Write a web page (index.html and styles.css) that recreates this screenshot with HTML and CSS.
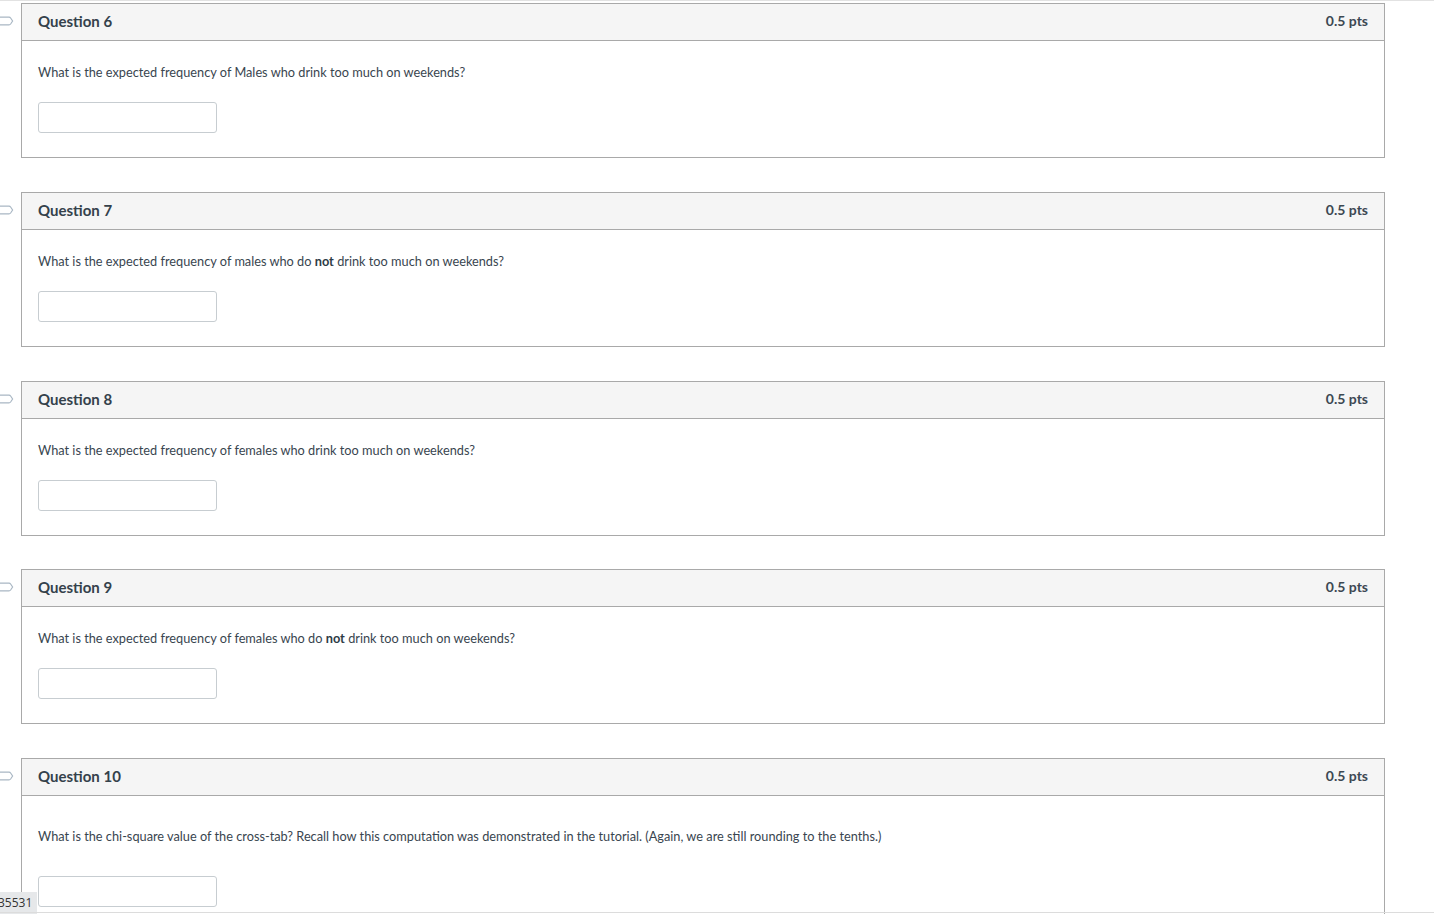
FILE: index.html
```html
<!DOCTYPE html>
<html lang="en">
<head>
<meta charset="utf-8">
<title>Quiz</title>
<link rel="stylesheet" href="styles.css">
</head>
<body>
<div class="topline"></div>
<main class="quiz">
  <section class="row">
    <div class="gutter"><svg class="flag" width="14" height="10" viewBox="0 0 14 10"><path d="M-4 1.2 H9 Q10 1.2 10.6 2 L12.6 5 L10.6 8 Q10 8.8 9 8.8 H-4" fill="none" stroke="#a9b7c4" stroke-width="1.2"/></svg></div>
    <div class="card">
      <div class="card-head"><span class="q-title">Question 6</span><span class="pts">0.5 pts</span></div>
      <div class="card-body">
        <p class="q-text">What is the expected frequency of Males who drink too much on weekends?</p>
        <div class="answer"></div>
      </div>
    </div>
  </section>
  <section class="row">
    <div class="gutter"><svg class="flag" width="14" height="10" viewBox="0 0 14 10"><path d="M-4 1.2 H9 Q10 1.2 10.6 2 L12.6 5 L10.6 8 Q10 8.8 9 8.8 H-4" fill="none" stroke="#a9b7c4" stroke-width="1.2"/></svg></div>
    <div class="card">
      <div class="card-head"><span class="q-title">Question 7</span><span class="pts">0.5 pts</span></div>
      <div class="card-body">
        <p class="q-text">What is the expected frequency of males who do <strong>not</strong> drink too much on weekends?</p>
        <div class="answer"></div>
      </div>
    </div>
  </section>
  <section class="row">
    <div class="gutter"><svg class="flag" width="14" height="10" viewBox="0 0 14 10"><path d="M-4 1.2 H9 Q10 1.2 10.6 2 L12.6 5 L10.6 8 Q10 8.8 9 8.8 H-4" fill="none" stroke="#a9b7c4" stroke-width="1.2"/></svg></div>
    <div class="card">
      <div class="card-head"><span class="q-title">Question 8</span><span class="pts">0.5 pts</span></div>
      <div class="card-body">
        <p class="q-text">What is the expected frequency of females who drink too much on weekends?</p>
        <div class="answer"></div>
      </div>
    </div>
  </section>
  <section class="row">
    <div class="gutter"><svg class="flag" width="14" height="10" viewBox="0 0 14 10"><path d="M-4 1.2 H9 Q10 1.2 10.6 2 L12.6 5 L10.6 8 Q10 8.8 9 8.8 H-4" fill="none" stroke="#a9b7c4" stroke-width="1.2"/></svg></div>
    <div class="card">
      <div class="card-head"><span class="q-title">Question 9</span><span class="pts">0.5 pts</span></div>
      <div class="card-body">
        <p class="q-text">What is the expected frequency of females who do <strong>not</strong> drink too much on weekends?</p>
        <div class="answer"></div>
      </div>
    </div>
  </section>
  <section class="row">
    <div class="gutter"><svg class="flag" width="14" height="10" viewBox="0 0 14 10"><path d="M-4 1.2 H9 Q10 1.2 10.6 2 L12.6 5 L10.6 8 Q10 8.8 9 8.8 H-4" fill="none" stroke="#a9b7c4" stroke-width="1.2"/></svg></div>
    <div class="card">
      <div class="card-head"><span class="q-title">Question 10</span><span class="pts">0.5 pts</span></div>
      <div class="card-body card-body-tall">
        <p class="q-text">What is the chi-square value of the cross-tab? Recall how this computation was demonstrated in the tutorial. (Again, we are still rounding to the tenths.)</p>
        <div class="answer"></div>
      </div>
    </div>
  </section>
</main>
<div class="badge">35531</div>
<div class="bottomline"></div>
</body>
</html>
```
FILE: styles.css
```css
html, body {
  margin: 0;
  padding: 0;
  background: #ffffff;
  overflow: hidden;
}
body {
  font-family: Lato, "Open Sans", sans-serif;
  color: #2d3b45;
  height: 914px;
}
.topline {
  height: 1px;
  background: #e2e2e2;
}
.quiz {
  padding-top: 2px;
  width: 1385px;
}
.row {
  display: flex;
  margin-bottom: 33.75px;
}
.gutter {
  width: 21px;
  flex: none;
  padding-top: 13px;
  overflow: hidden;
}
.flag {
  display: block;
}
.card {
  flex: 1;
  border: 1px solid #a9a9a9;
  background: #fff;
}
.card-head {
  height: 37px;
  box-sizing: border-box;
  padding: 0 16px 2px;
  background: #f5f5f5;
  border-bottom: 1px solid #a9a9a9;
  display: flex;
  align-items: center;
  justify-content: space-between;
}
.q-title {
  font-size: 15px;
  font-weight: 700;
  color: #34414b;
}
.pts {
  font-size: 14px;
  font-weight: 700;
  color: #3c4852;
  padding-bottom: 1px;
}
.card-body {
  padding: 22px 16px 24px;
}
.card-body-tall {
  padding-top: 31px;
}
.card-body-tall .q-text {
  margin-bottom: 30px;
}
.q-text {
  margin: 0 0 20px;
  font-size: 12.75px;
  line-height: 19px;
  color: #39454f;
}
.q-text strong {
  font-weight: 700;
  color: #2d3b45;
}
.answer {
  width: 177px;
  height: 29px;
  border: 1px solid #c7cdd1;
  border-radius: 3px;
  background: #fff;
}
.badge {
  position: fixed;
  left: 0;
  bottom: 0;
  width: 37px;
  height: 22px;
  background: #e6e8ea;
  color: #333;
  font-family: "Open Sans", sans-serif;
  font-size: 12px;
  line-height: 22px;
  text-indent: -2px;
  overflow: hidden;
  white-space: nowrap;
}
.bottomline {
  position: fixed;
  left: 0;
  right: 0;
  bottom: 1px;
  height: 1px;
  background: #dcdcdc;
}
```
